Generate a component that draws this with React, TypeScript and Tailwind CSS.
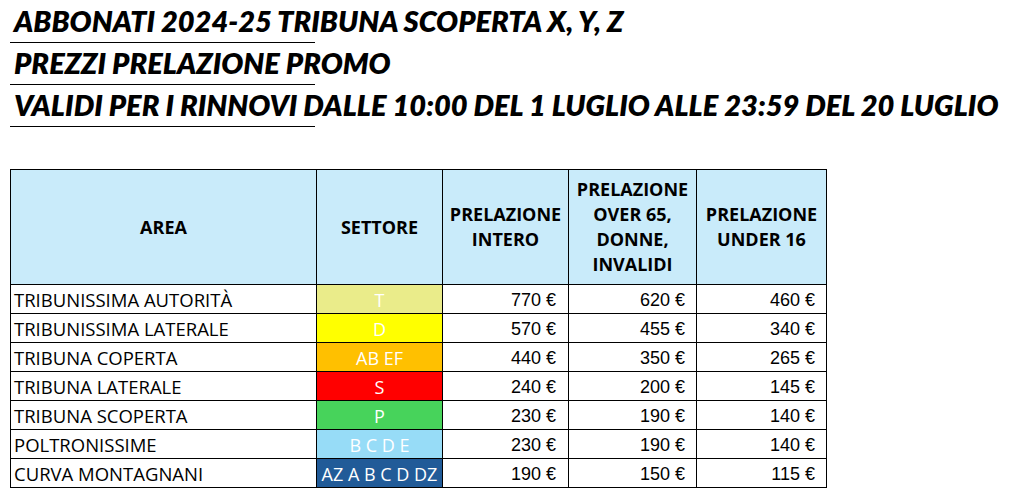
import React from 'react';

const titleLines = [
  'ABBONATI 2024-25 TRIBUNA SCOPERTA X, Y, Z',
  'PREZZI PRELAZIONE PROMO',
  'VALIDI PER I RINNOVI DALLE 10:00 DEL 1 LUGLIO ALLE 23:59 DEL 20 LUGLIO',
];

interface Row {
  area: string;
  settore: string;
  color: string;
  intero: string;
  over: string;
  under: string;
}

const rows: Row[] = [
  { area: 'TRIBUNISSIMA AUTORITÀ', settore: 'T', color: 'bg-[#eaec8a]', intero: '770 €', over: '620 €', under: '460 €' },
  { area: 'TRIBUNISSIMA LATERALE', settore: 'D', color: 'bg-[#ffff00]', intero: '570 €', over: '455 €', under: '340 €' },
  { area: 'TRIBUNA COPERTA', settore: 'AB EF', color: 'bg-[#ffc000]', intero: '440 €', over: '350 €', under: '265 €' },
  { area: 'TRIBUNA LATERALE', settore: 'S', color: 'bg-[#ff0000]', intero: '240 €', over: '200 €', under: '145 €' },
  { area: 'TRIBUNA SCOPERTA', settore: 'P', color: 'bg-[#47d35b]', intero: '230 €', over: '190 €', under: '140 €' },
  { area: 'POLTRONISSIME', settore: 'B C D E', color: 'bg-[#97dcf7]', intero: '230 €', over: '190 €', under: '140 €' },
  { area: 'CURVA MONTAGNANI', settore: 'AZ A B C D DZ', color: 'bg-[#215b98]', intero: '190 €', over: '150 €', under: '115 €' },
];

const headers = [
  { label: ['AREA'], w: 'w-[306px]' },
  { label: ['SETTORE'], w: 'w-[126px]' },
  { label: ['PRELAZIONE', 'INTERO'], w: 'w-[126px]' },
  { label: ['PRELAZIONE', 'OVER 65,', 'DONNE,', 'INVALIDI'], w: 'w-[128px]' },
  { label: ['PRELAZIONE', 'UNDER 16'], w: 'w-[130px]' },
];

export default function App() {
  return (
    <div className="w-[1024px] h-[495px] bg-white overflow-hidden text-black">
      {/* Titles */}
      <div className="pl-[10px] pt-[1px]">
        {titleLines.map((t) => (
          <div key={t} className="w-[305px] h-[42px] border-b-[1.5px] border-black whitespace-nowrap">
            <span className="block pl-[4px] pt-[4px] font-['Lato',sans-serif] font-extrabold italic text-[29px] leading-[32px]">
              {t}
            </span>
          </div>
        ))}
      </div>

      {/* Table */}
      <table className="ml-[10px] mt-[42px] border-collapse table-fixed">
        <thead>
          <tr className="h-[115px] bg-[#c9ebfa]">
            {headers.map((h, i) => (
              <th
                key={i}
                className={`${h.w} border-[1.5px] border-black p-0 align-middle text-center font-['Open_Sans',sans-serif] font-bold text-[18px] leading-[25px] whitespace-nowrap`}
              >
                {h.label.map((l) => (
                  <div key={l}>{l}</div>
                ))}
              </th>
            ))}
          </tr>
        </thead>
        <tbody>
          {rows.map((r) => (
            <tr key={r.area} className="h-[29px]">
              <td className="border-[1.5px] border-black pl-[3px] pt-[2px] font-['Open_Sans',sans-serif] text-[18.5px] leading-[24px] whitespace-nowrap">
                {r.area}
              </td>
              <td className={`${r.color} border-[1.5px] border-black pt-[2px] text-center text-white font-['Open_Sans',sans-serif] text-[18px] leading-[24px] whitespace-nowrap`}>
                {r.settore}
              </td>
              <td className="border-[1.5px] border-black pr-[12px] pt-[2px] text-right font-['Liberation_Sans',sans-serif] text-[18px] leading-[24px]">
                {r.intero}
              </td>
              <td className="border-[1.5px] border-black pr-[11px] pt-[2px] text-right font-['Liberation_Sans',sans-serif] text-[18px] leading-[24px]">
                {r.over}
              </td>
              <td className="border-[1.5px] border-black pr-[11px] pt-[2px] text-right font-['Liberation_Sans',sans-serif] text-[18px] leading-[24px]">
                {r.under}
              </td>
            </tr>
          ))}
        </tbody>
      </table>
    </div>
  );
}
